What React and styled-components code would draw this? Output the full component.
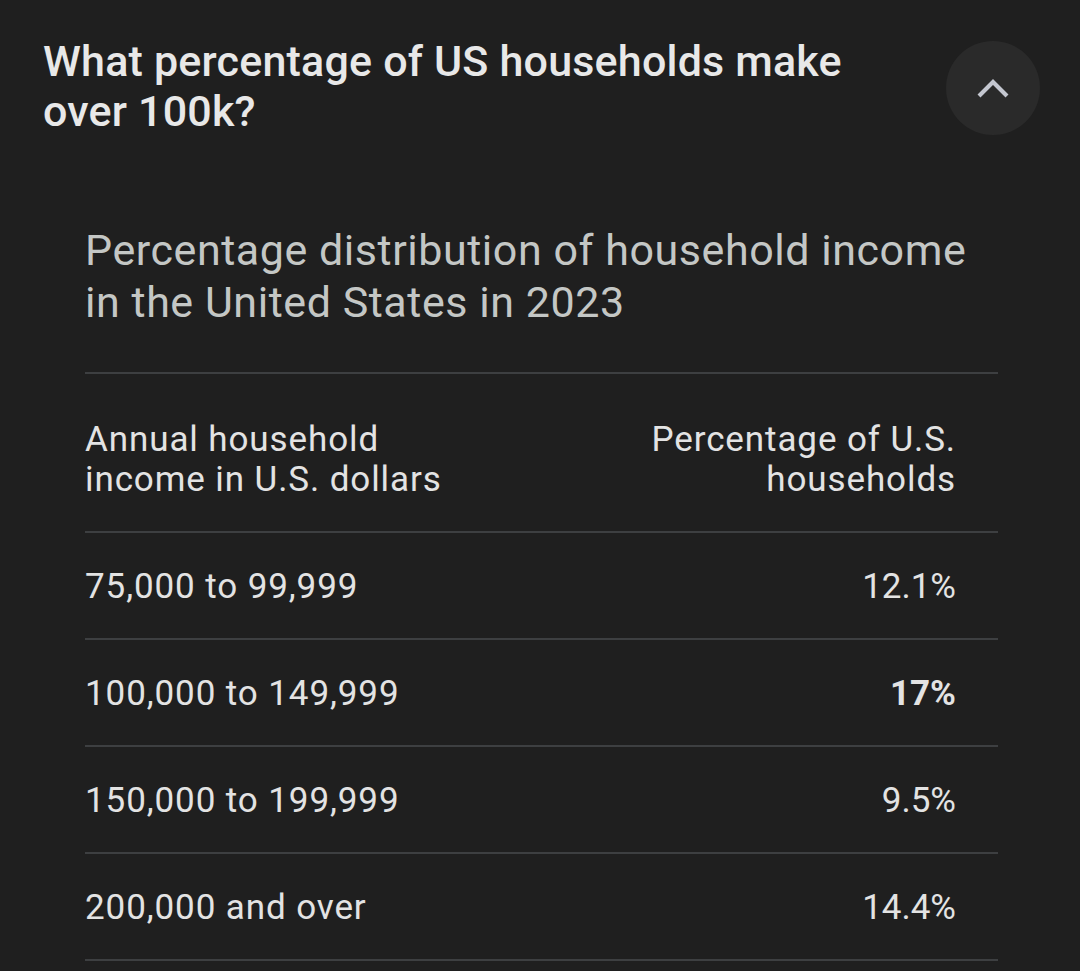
import React from 'react';
import styled, { createGlobalStyle } from 'styled-components';

const GlobalStyle = createGlobalStyle`
  html, body {
    margin: 0;
    padding: 0;
    background: #1f1f1f;
  }
  body {
    font-family: Roboto, "Noto Sans", Arial, sans-serif;
    -webkit-font-smoothing: antialiased;
  }
`;

const Page = styled.div`
  width: 1080px;
  min-height: 971px;
  box-sizing: border-box;
  padding: 36px 40px 0 43px;
  background: #1f1f1f;
`;

const QuestionRow = styled.div`
  display: flex;
  justify-content: space-between;
  align-items: flex-start;
`;

const Question = styled.h1`
  margin: 0;
  width: 850px;
  font-size: 43px;
  line-height: 50px;
  font-weight: 500;
  letter-spacing: 0.2px;
  color: #e8e8e8;
`;

const ToggleButton = styled.button`
  flex: none;
  width: 94px;
  height: 94px;
  margin-top: 5px;
  border: none;
  border-radius: 50%;
  background: #2a2a2a;
  display: flex;
  align-items: center;
  justify-content: center;
  padding: 0;
  cursor: pointer;
`;

const Panel = styled.section`
  margin: 88px 42px 0 42px;
`;

const ChartTitle = styled.h2`
  margin: 0 0 44px 0;
  max-width: 890px;
  font-size: 43px;
  line-height: 52px;
  font-weight: 400;
  letter-spacing: 0.55px;
  color: #c4c7c5;
`;

const Table = styled.div`
  border-top: 2px solid #3d3f41;
`;

const Row = styled.div`
  display: grid;
  grid-template-columns: 1fr 1fr;
  align-items: center;
  box-sizing: border-box;
  height: ${(p) => (p.head ? '159px' : '107px')};
  padding: ${(p) => (p.head ? '14px 42px 0 0' : '2px 42px 0 0')};
  border-bottom: 2px solid #3d3f41;
  font-size: 35px;
  line-height: 40px;
  letter-spacing: 0.9px;
  color: #e3e3e3;
`;

const Cell = styled.div`
  text-align: ${(p) => (p.right ? 'right' : 'left')};
  font-weight: ${(p) => (p.bold ? 700 : 400)};
`;

const Value = styled(Cell)`
  letter-spacing: 0;
`;

const rows = [
  { range: '75,000 to 99,999', pct: '12.1%' },
  { range: '100,000 to 149,999', pct: '17%', bold: true },
  { range: '150,000 to 199,999', pct: '9.5%' },
  { range: '200,000 and over', pct: '14.4%' },
];

export default function App() {
  return (
    <>
      <GlobalStyle />
      <Page>
        <QuestionRow>
          <Question>What percentage of US households make over 100k?</Question>
          <ToggleButton aria-label="Collapse">
            <svg width="36" height="24" viewBox="0 0 36 24">
              <path d="M4 20 L18 6 L32 20" fill="none" stroke="#c4c7d0" strokeWidth="4.2" />
            </svg>
          </ToggleButton>
        </QuestionRow>
        <Panel>
          <ChartTitle>Percentage distribution of household income in the United States in 2023</ChartTitle>
          <Table>
            <Row head>
              <Cell>Annual household<br />income in U.S. dollars</Cell>
              <Cell right>Percentage of U.S.<br />households</Cell>
            </Row>
            {rows.map((r) => (
              <Row key={r.range}>
                <Cell>{r.range}</Cell>
                <Value right bold={r.bold}>{r.pct}</Value>
              </Row>
            ))}
          </Table>
        </Panel>
      </Page>
    </>
  );
}
